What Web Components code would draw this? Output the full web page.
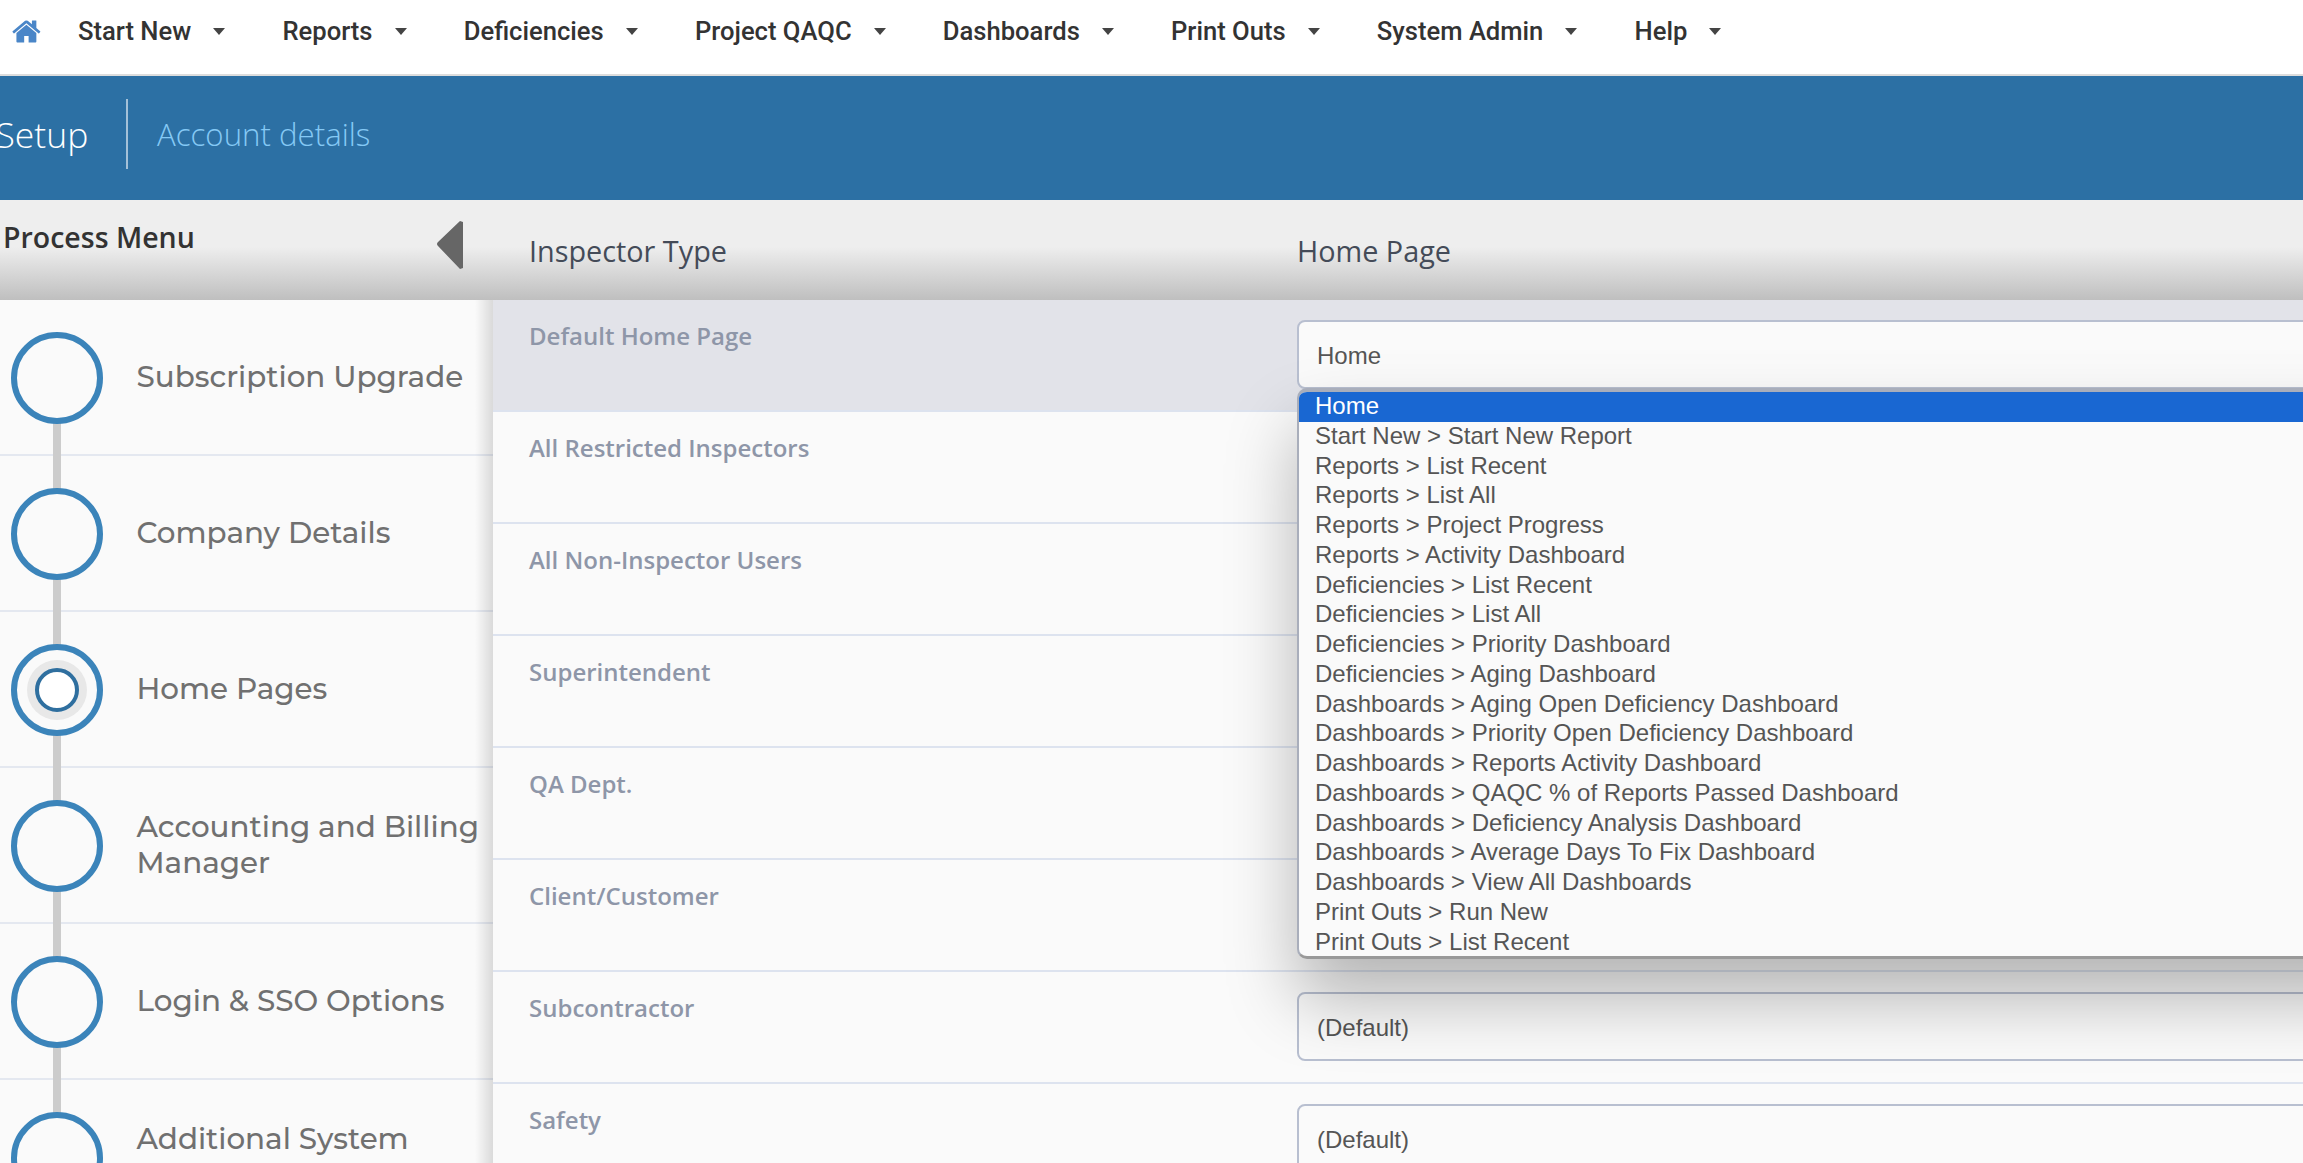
<!DOCTYPE html>
<html>
<head>
<meta charset="utf-8">
<title>Account details</title>
<style>
html, body { margin: 0; padding: 0; height: 100%; overflow: hidden; background: #fafafa; }
</style>
</head>
<body>
<app-shell>
  <top-nav></top-nav>
  <page-title heading="Setup" sub="Account details"></page-title>
  <div slot="side-head">Process Menu</div>
  <process-menu slot="side"></process-menu>
  <home-pages slot="main"></home-pages>
</app-shell>

<script>
const OPTIONS = [
    "Home",
    "Start New > Start New Report",
    "Reports > List Recent",
    "Reports > List All",
    "Reports > Project Progress",
    "Reports > Activity Dashboard",
    "Deficiencies > List Recent",
    "Deficiencies > List All",
    "Deficiencies > Priority Dashboard",
    "Deficiencies > Aging Dashboard",
    "Dashboards > Aging Open Deficiency Dashboard",
    "Dashboards > Priority Open Deficiency Dashboard",
    "Dashboards > Reports Activity Dashboard",
    "Dashboards > QAQC % of Reports Passed Dashboard",
    "Dashboards > Deficiency Analysis Dashboard",
    "Dashboards > Average Days To Fix Dashboard",
    "Dashboards > View All Dashboards",
    "Print Outs > Run New",
    "Print Outs > List Recent",
];

class TopNav extends HTMLElement {
    connectedCallback() {
        const items = ["Start New", "Reports", "Deficiencies", "Project QAQC", "Dashboards", "Print Outs", "System Admin", "Help"];
        this.attachShadow({ mode: "open" }).innerHTML = `
        <style>
        :host { display: flex; align-items: center; background: #fff; border-bottom: 2px solid #ddd; padding: 0 0 12px 12px; height: 62px; font: 500 25.6px Roboto, sans-serif; color: #333; }
        svg { width: 31px; height: 31px; fill: #4a86c8; margin-right: 35px; flex: none; }
        .item { display: flex; align-items: center; margin-right: 57.2px; white-space: nowrap; }
        .caret { width: 0; height: 0; margin-left: 22px; border-left: 6px solid transparent; border-right: 6px solid transparent; border-top: 7px solid #444; }
        </style>
        <svg viewBox="0 0 1792 1792"><path d="M1408 992v480q0 26-19 45t-45 19h-384v-384h-256v384h-384q-26 0-45-19t-19-45v-480q0-1 .5-3t.5-3l575-474 575 474q1 2 1 6zm223-69l-62 74q-8 9-21 11h-3q-13 0-21-7l-692-577-692 577q-12 8-24 7-13-2-21-11l-62-74q-8-10-7-23.500t11-21.500l719-599q32-26 76-26t76 26l244 204v-195q0-14 9-23t23-9h192q14 0 23 9t9 23v408l219 182q10 8 11 21.500t-7 23.500z"/></svg>
        ${items.map(t => `<div class="item">${t}<span class="caret"></span></div>`).join("")}
        `;
    }
}

class PageTitle extends HTMLElement {
    connectedCallback() {
        this.attachShadow({ mode: "open" }).innerHTML = `
        <style>
        :host { display: flex; align-items: center; height: 124px; box-sizing: border-box; padding-bottom: 8px; background: #2c70a4; font-family: "Open Sans", sans-serif; overflow: hidden; }
        h1 { margin: 0 0 0 -4.5px; width: 130.5px; flex: none; font-size: 35.5px; font-weight: 300; color: #fff; white-space: nowrap; }
        .rule { width: 2px; height: 70px; background: #a4c1d8; margin-right: 29px; flex: none; }
        .sub { font-size: 31.2px; font-weight: 300; color: #85c9f5; }
        </style>
        <h1>${this.getAttribute("heading")}</h1>
        <div class="rule"></div>
        <div class="sub">${this.getAttribute("sub")}</div>
        `;
    }
}

class AppShell extends HTMLElement {
    constructor() {
        super();
        this.attachShadow({ mode: "open" }).innerHTML = `
        <style>
        :host { display: block; height: 100vh; overflow: hidden; }
        .band { display: flex; height: 100px; background: linear-gradient(#eee 0, #eee 47px, #bfbfbf 100px); }
        .side-head { width: 493px; flex: none; box-sizing: border-box; padding: 18px 0 0 3px; position: relative; font: 600 28.5px "Open Sans", sans-serif; color: #333; }
        .tri { position: absolute; left: 436px; top: 20px; }
        .heads { display: flex; flex: 1; padding-top: 31px; font: 500 28.8px "Open Sans", sans-serif; color: #444b58; }
        .heads div:first-child { width: 804px; padding-left: 36px; box-sizing: border-box; }
        .body { display: flex; }
        .side { width: 493px; flex: none; }
        .main { flex: 1; min-width: 0; }
        </style>
        <slot></slot>
        <div class="band">
            <div class="side-head"><slot name="side-head"></slot>
                <svg class="tri" width="28" height="50" viewBox="0 0 28 50"><path d="M27 2 L27 48 L24 49 L2 26 Q0 24 2 22 L24 1 Z" fill="#666"/></svg>
            </div>
            <div class="heads"><div>Inspector Type</div><div>Home Page</div></div>
        </div>
        <div class="body">
            <div class="side"><slot name="side"></slot></div>
            <div class="main"><slot name="main"></slot></div>
        </div>
        `;
    }
}

class ProcessStep extends HTMLElement {
    connectedCallback() {
        const active = this.hasAttribute("active");
        const first = this.hasAttribute("first");
        this.attachShadow({ mode: "open" }).innerHTML = `
        <style>
        :host { display: flex; align-items: center; position: relative; height: 156px; box-sizing: border-box; border-bottom: 2px solid #e4e8f0; padding-left: 11px; font: 500 29.4px Montserrat, Inter, sans-serif; color: #707070; line-height: 36px; }
        .line { position: absolute; left: 53px; width: 8px; top: ${first ? "60px" : "-2px"}; bottom: -2px; background: #ccc; }
        .ring { position: relative; width: 92px; height: 92px; flex: none; box-sizing: border-box; border: 6px solid #3b84ba; border-radius: 50%; background: #fafafa; display: grid; place-items: center; margin-top: 2px; }
        .halo { width: 60px; height: 60px; border-radius: 50%; background: #e8e8e8; display: grid; place-items: center; }
        .dot { width: 44px; height: 44px; box-sizing: border-box; border: 4px solid #2f6f9f; border-radius: 50%; background: #fff; }
        .label { margin-left: 33.5px; position: relative; }
        </style>
        <div class="line"></div>
        <div class="ring">${active ? '<div class="halo"><div class="dot"></div></div>' : ""}</div>
        <div class="label"><slot></slot></div>
        `;
    }
}

class ProcessMenu extends HTMLElement {
    constructor() {
        super();
        this.attachShadow({ mode: "open" }).innerHTML = `
        <style>
        :host { display: block; height: 863px; overflow: hidden; background: #fafafa; position: relative; }
        .edge { position: absolute; right: 0; top: 0; bottom: 0; width: 18px; background: linear-gradient(90deg, rgba(0,0,0,0), rgba(0,0,0,.13)); pointer-events: none; }
        </style>
        <process-step first>Subscription Upgrade</process-step>
        <process-step>Company Details</process-step>
        <process-step active>Home Pages</process-step>
        <process-step>Accounting and Billing<br>Manager</process-step>
        <process-step>Login &amp; SSO Options</process-step>
        <process-step>Additional System<br>Settings</process-step>
        <div class="edge"></div>
        `;
    }
}

class SelectBox extends HTMLElement {
    connectedCallback() {
        this.attachShadow({ mode: "open" }).innerHTML = `
        <style>
        :host { display: block; width: 1200px; height: 69px; box-sizing: border-box; border: 2px solid #b8bfd0; border-radius: 8px; background: #fafafa; padding: 1px 0 0 18px; font: 24px/65px "Liberation Sans", Arial, sans-serif; color: #555; white-space: nowrap; }
        </style>
        <slot></slot>
        `;
    }
}

class OptionList extends HTMLElement {
    connectedCallback() {
        this.attachShadow({ mode: "open" }).innerHTML = `
        <style>
        :host { display: block; position: absolute; left: 804px; top: 88px; width: 1200px; height: 571px; box-sizing: border-box; border: 2px solid #a9aebb; border-width: 4px 2px 3px; border-bottom-color: #999; border-radius: 10px 0 0 10px; background: #fafafa; box-shadow: 0 40px 70px rgba(0,0,0,.28); font: 24px/28.5px "Liberation Sans", Arial, sans-serif; color: #555; overflow: hidden; z-index: 5; }
        div { padding-left: 16px; height: 29.75px; white-space: nowrap; }
        .sel { background: #1967d2; color: #fff; }
        </style>
        ${OPTIONS.map((t, i) => `<div class="${i === 0 ? "sel" : ""}">${t.replace(">", "&gt;")}</div>`).join("")}
        `;
    }
}

class HomeRow extends HTMLElement {
    connectedCallback() {
        const on = this.hasAttribute("highlight");
        const value = this.getAttribute("value");
        this.attachShadow({ mode: "open" }).innerHTML = `
        <style>
        :host { display: flex; height: 112px; box-sizing: border-box; border-bottom: 2px solid #dde3ef; background: ${on ? "#e2e3e9" : "#fafafa"}; }
        .name { width: 804px; flex: none; box-sizing: border-box; padding: 19px 0 0 36px; font: 600 24px "Open Sans", sans-serif; color: #8e96a8; }
        .cell { padding-top: 20px; }
        </style>
        <div class="name"><slot></slot></div>
        <div class="cell">${value ? `<select-box>${value}</select-box>` : ""}</div>
        `;
    }
}

class HomePages extends HTMLElement {
    constructor() {
        super();
        this.attachShadow({ mode: "open" }).innerHTML = `
        <style>
        :host { display: block; position: relative; height: 863px; overflow: hidden; }
        </style>
        <home-row highlight value="Home">Default Home Page</home-row>
        <home-row>All Restricted Inspectors</home-row>
        <home-row>All Non-Inspector Users</home-row>
        <home-row>Superintendent</home-row>
        <home-row>QA Dept.</home-row>
        <home-row>Client/Customer</home-row>
        <home-row value="(Default)">Subcontractor</home-row>
        <home-row value="(Default)">Safety</home-row>
        <option-list></option-list>
        `;
    }
}

customElements.define("top-nav", TopNav);
customElements.define("page-title", PageTitle);
customElements.define("app-shell", AppShell);
customElements.define("process-step", ProcessStep);
customElements.define("process-menu", ProcessMenu);
customElements.define("select-box", SelectBox);
customElements.define("option-list", OptionList);
customElements.define("home-row", HomeRow);
customElements.define("home-pages", HomePages);
</script>
</body>
</html>
